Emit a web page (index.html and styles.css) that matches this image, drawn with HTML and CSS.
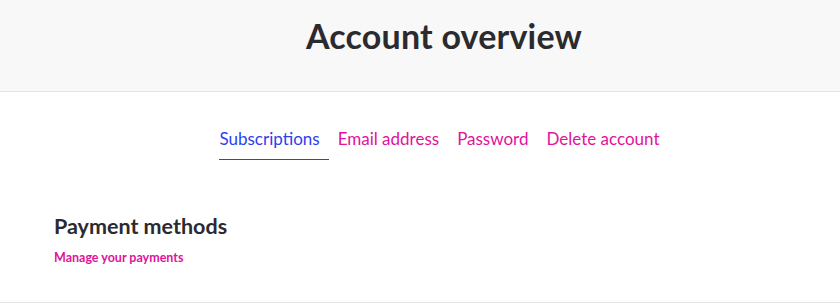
FILE: index.html
```html
<!DOCTYPE html>
<html lang="en">
<head>
  <meta charset="UTF-8" />
  <meta name="viewport" content="width=device-width, initial-scale=1.0"/>
  <title>Account overview</title>
  <link rel="stylesheet" href="styles.css">
</head>
<body>

  <!-- Page header -->
  <header class="page-header">
    <h1>Account overview</h1>
  </header>

  <!-- Account tabs -->
  <nav class="tabs">
    <a href="#" class="tab active">Subscriptions</a>
    <a href="#" class="tab">Email address</a>
    <a href="#" class="tab">Password</a>
    <a href="#" class="tab">Delete account</a>
  </nav>

  <!-- Payment section -->
  <section class="payments">
    <h2>Payment methods</h2>
    <a href="#" class="manage-link">Manage your payments</a>
  </section>

</body>
</html>
```

FILE: styles.css
```css
* {
  box-sizing: border-box;
}

html, body {
  margin: 0;
  padding: 0;
  font-family: Lato, "Noto Sans", sans-serif;
  background-color: #ffffff;
  color: #2b2a2e;
}

a {
  text-decoration: none;
}

/* Header band */
.page-header {
  height: 92px;
  background-color: #f8f8f8;
  border-bottom: 1px solid #e4e4e4;
  display: flex;
  align-items: center;
  justify-content: center;
  padding-left: 48px;
}

.page-header h1 {
  margin: 0 0 20px;
  font-size: 34px;
  font-weight: bold;
  letter-spacing: 0.2px;
}

/* Tabs */
.tabs {
  display: flex;
  justify-content: center;
  gap: 9px;
  padding: 36px 0 0 48px;
}

.tab {
  font-size: 17px;
  color: #e0139c;
  padding: 0 9px 10px 0;
  border-bottom: 1px solid transparent;
}

.tab.active {
  color: #2b3ff0;
  border-bottom-color: #2b3ff0;
}

/* Payment methods */
.payments {
  margin-top: 53px;
  padding: 0 54px 37px;
  border-bottom: 1px solid #e4e4e4;
}

.payments h2 {
  margin: 0 0 11px;
  font-size: 21.5px;
  font-weight: bold;
}

.manage-link {
  display: block;
  font-size: 12.5px;
  font-weight: bold;
  color: #e0139c;
}
```
